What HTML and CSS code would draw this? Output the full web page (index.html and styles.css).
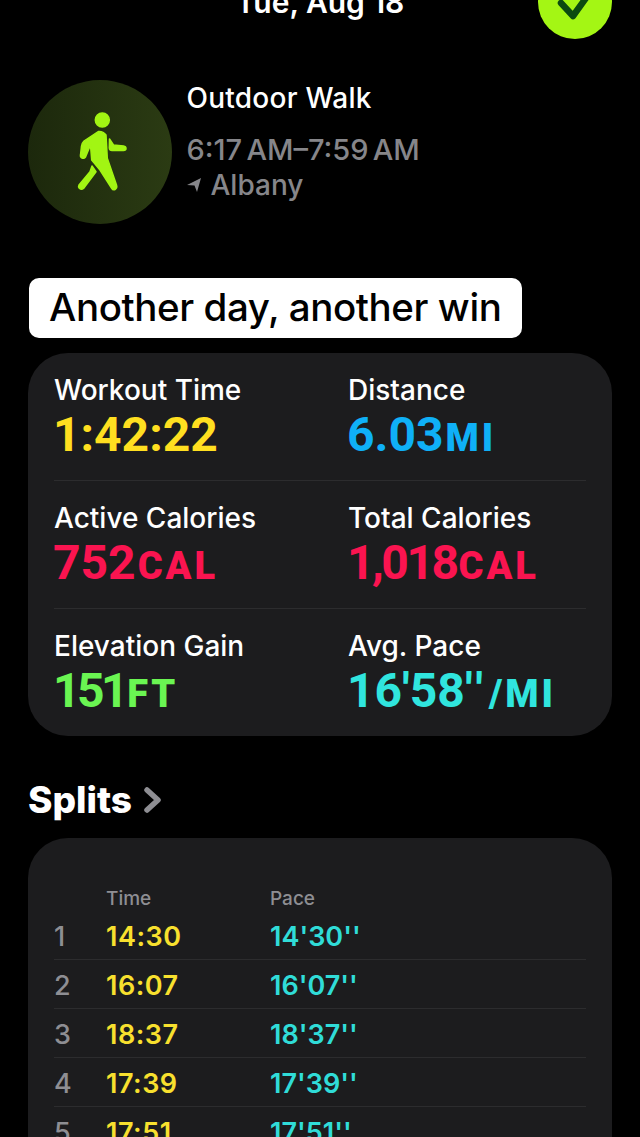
FILE: index.html
```html
<!DOCTYPE html>
<html lang="en">
<head>
  <meta charset="UTF-8" />
  <title>Workout Details</title>
  <link rel="stylesheet" href="styles.css">
</head>
<body>
  <div class="screen">

    <!-- top bar, cut off by the top of the picture -->
    <header class="top-bar">
      <span class="top-date">Tue, Aug 18</span>
      <span class="done-btn">
        <svg viewBox="0 0 74 74" width="74" height="74">
          <path d="M23 38 L35 51 L53 26" fill="none" stroke="#0b4a10" stroke-width="6.5" stroke-linecap="round" stroke-linejoin="round"/>
        </svg>
      </span>
    </header>

    <section class="summary">
      <div class="activity-icon">
        <svg viewBox="0 0 144 144" width="144" height="144">
          <g fill="#a2f513" stroke="#a2f513" stroke-width="1.5" stroke-linejoin="round">
            <circle cx="74.3" cy="40" r="7"/>
            <path d="M70.3 51.5 Q75 51 78 55 L79.3 78.3 L88.5 105 Q89.5 108 87 109.5 Q85 110.5 83.5 108 L72 90 L63.7 80 L62.5 65 L57.5 77 Q56 79 54 78 Q52 77 52.5 75 L53.5 66 Q54 63 56 61 Z"/>
            <path d="M64 86 L68 91.7 L55.5 108.5 Q53.5 110 51.5 108.5 Q50 106.5 51 105 L62 91.7 Z"/>
            <path d="M81.5 59 L85.5 65 L95.5 66 Q98 66.5 98 68.5 Q98 70.5 95.5 70.5 L84 70.5 Q81.5 70.5 81.3 68 Z"/>
          </g>
        </svg>
      </div>
      <div class="summary-text">
        <div class="activity-name">Outdoor Walk</div>
        <div class="activity-time">6:17 AM–7:59 AM</div>
        <div class="activity-place">
          <svg viewBox="0 0 14 14" width="14" height="14"><path d="M14 0 L10 14 L7.5 7.5 L0 7 Z" fill="#86868a"/></svg>
          Albany
        </div>
      </div>
    </section>

    <div class="caption">Another day, another win</div>

    <section class="card stats">
      <div class="stat-row">
        <div class="stat">
          <div class="stat-label">Workout Time</div>
          <div class="stat-value yellow">1:42:22</div>
        </div>
        <div class="stat">
          <div class="stat-label">Distance</div>
          <div class="stat-value blue">6.03<span class="unit">MI</span></div>
        </div>
      </div>
      <div class="stat-row">
        <div class="stat">
          <div class="stat-label">Active Calories</div>
          <div class="stat-value red">752<span class="unit">CAL</span></div>
        </div>
        <div class="stat">
          <div class="stat-label">Total Calories</div>
          <div class="stat-value red"><span class="tight">1,018</span><span class="unit">CAL</span></div>
        </div>
      </div>
      <div class="stat-row">
        <div class="stat">
          <div class="stat-label">Elevation Gain</div>
          <div class="stat-value green"><span class="tighter">151</span><span class="unit">FT</span></div>
        </div>
        <div class="stat">
          <div class="stat-label">Avg. Pace</div>
          <div class="stat-value cyan">16'58<span class="primes">''</span><span class="unit">/MI</span></div>
        </div>
      </div>
    </section>

    <h2 class="section-title">Splits
      <svg viewBox="0 0 18 26" width="18" height="26"><path d="M3 3 L14 13 L3 23" fill="none" stroke="#8e8e93" stroke-width="5.5" stroke-linejoin="round" stroke-linecap="round"/></svg>
    </h2>

    <section class="card splits">
      <div class="split-head">
        <span class="split-num"></span>
        <span class="split-time">Time</span>
        <span class="split-pace">Pace</span>
      </div>
      <div class="split-row">
        <span class="split-num">1</span><span class="split-time">14:30</span><span class="split-pace">14'30''</span>
      </div>
      <div class="split-row">
        <span class="split-num">2</span><span class="split-time">16:07</span><span class="split-pace">16'07''</span>
      </div>
      <div class="split-row">
        <span class="split-num">3</span><span class="split-time">18:37</span><span class="split-pace">18'37''</span>
      </div>
      <div class="split-row">
        <span class="split-num">4</span><span class="split-time">17:39</span><span class="split-pace">17'39''</span>
      </div>
      <div class="split-row">
        <span class="split-num">5</span><span class="split-time">17:51</span><span class="split-pace">17'51''</span>
      </div>
    </section>
  </div>
</body>
</html>
```

FILE: styles.css
```css
html, body {
  margin: 0;
  padding: 0;
  height: 100%;
  overflow: hidden;
  background: #000;
}

body {
  font-family: Inter, "Liberation Sans", sans-serif;
  color: #fff;
}

.screen {
  height: 1137px;
  overflow: hidden;
  padding: 0 28px;
  box-sizing: border-box;
}

/* TOP BAR */
.top-bar {
  height: 39px;
  display: flex;
  justify-content: center;
  align-items: flex-end;
  position: relative;
}

.top-date {
  font-size: 30px;
  font-weight: 600;
  line-height: 32px;
  margin-bottom: 21px;
  white-space: nowrap;
}

.done-btn {
  position: absolute;
  right: 0;
  top: -35px;
  width: 74px;
  height: 74px;
  border-radius: 50%;
  background: #a4f614;
}

/* SUMMARY */
.summary {
  display: flex;
  gap: 14.5px;
  margin-top: 41px;
  height: 144px;
}

.activity-icon {
  width: 144px;
  height: 144px;
  border-radius: 50%;
  background: linear-gradient(90deg, #1c280c, #2b3b13);
  flex: none;
}

.summary-text { padding-top: 1px; }

.activity-name {
  font-size: 28px;
  font-weight: 500;
  line-height: 34px;
  letter-spacing: 0.25px;
}

.activity-time {
  font-size: 29px;
  font-weight: 500;
  line-height: 34px;
  margin-top: 18px;
  color: #86868a;
  word-spacing: -3.5px;
}

.activity-place {
  font-size: 28px;
  font-weight: 500;
  line-height: 36px;
  color: #86868a;
  display: flex;
  align-items: center;
  gap: 10px;
}

/* CAPTION */
.caption {
  display: inline-block;
  margin: 54px 0 0 1px;
  padding: 0 21px 0 20px;
  height: 60px;
  line-height: 58px;
  background: #fff;
  color: #000;
  border-radius: 10px;
  font-size: 38.5px;
  font-weight: 500;
  letter-spacing: -0.4px;
  white-space: nowrap;
}

/* CARDS */
.card {
  background: #1c1c1e;
  border-radius: 40px;
}

.stats {
  margin-top: 15px;
  height: 383px;
  padding: 0 26px;
  box-sizing: border-box;
}

.stat-row {
  display: flex;
  height: 128px;
  box-sizing: border-box;
  padding-top: 20px;
  border-bottom: 1px solid #2c2c2e;
}

.stat-row:last-child { border-bottom: none; }

.stat { width: 294px; flex: none; }

.stat-label {
  font-size: 28px;
  font-weight: 500;
  line-height: 34px;
  white-space: nowrap;
}

.stat-value {
  font-family: Roboto, sans-serif;
  font-size: 48px;
  font-weight: 700;
  line-height: 56px;
  margin-left: -1px;
  white-space: nowrap;
}

.tight { letter-spacing: -2.5px; }
.tighter { letter-spacing: -3.5px; }
.primes { letter-spacing: 4px; }

.unit {
  font-size: 38px;
  font-weight: 900;
  letter-spacing: 3px;
  margin-left: 2px;
}

.yellow { color: #ffdf20; }
.blue { color: #0fb0f7; }
.red { color: #fa1450; }
.green { color: #6af552; }
.cyan { color: #30e5de; }

/* SPLITS */
.section-title {
  margin: 43px 0 0;
  font-size: 37px;
  font-weight: 800;
  line-height: 42px;
  display: flex;
  align-items: center;
  gap: 12px;
}

.splits {
  margin-top: 17px;
  height: 400px;
  padding: 48px 26px 0;
  box-sizing: border-box;
}

.split-head,
.split-row {
  display: flex;
  align-items: center;
}

.split-head {
  height: 25px;
  font-size: 19px;
  font-weight: 500;
  color: #8e8e93;
}

.split-row {
  height: 49px;
  box-sizing: border-box;
  border-bottom: 1px solid #2c2c2e;
  font-size: 27px;
  font-weight: 600;
  padding-top: 2px;
  letter-spacing: 0.5px;
}

.split-num { width: 52px; color: #8e8e93; font-weight: 500; }
.split-time { width: 164px; }
.split-row .split-time { color: #f8e02e; }
.split-row .split-pace { color: #30dcd8; letter-spacing: 0; }
```
